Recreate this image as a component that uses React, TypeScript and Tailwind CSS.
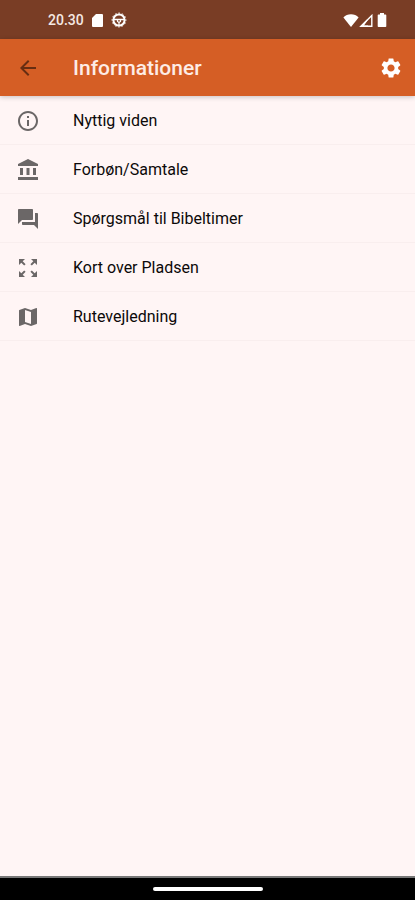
import type { IconType } from "react-icons";
import {
  MdAccountBalance,
  MdArrowBack,
  MdForum,
  MdInfoOutline,
  MdMap,
  MdSettings,
  MdZoomOutMap,
} from "react-icons/md";

type MenuItem = {
  label: string;
  icon: IconType;
};

const items: MenuItem[] = [
  { label: "Nyttig viden", icon: MdInfoOutline },
  { label: "Forbøn/Samtale", icon: MdAccountBalance },
  { label: "Spørgsmål til Bibeltimer", icon: MdForum },
  { label: "Kort over Pladsen", icon: MdZoomOutMap },
  { label: "Rutevejledning", icon: MdMap },
];

function StatusBar() {
  return (
    <div className="flex h-[39px] shrink-0 items-center justify-between bg-[#793d25] pl-12 pr-7 pt-px text-white">
      <div className="flex items-center gap-2">
        <span className="text-sm font-medium text-[#f6e9e4]">20.30</span>
        {/* SD card */}
        <svg className="h-[13px] w-[11px]" viewBox="0 0 11 13" fill="currentColor" aria-hidden="true">
          <path d="M4 0h6a1 1 0 0 1 1 1v11a1 1 0 0 1-1 1H1a1 1 0 0 1-1-1V4z" />
        </svg>
        <svg className="size-4" viewBox="0 0 16 16" fill="none" stroke="currentColor" aria-hidden="true">
          <circle cx="8" cy="8" r="5.6" strokeWidth="2" />
          <circle cx="8" cy="8" r="6.9" strokeWidth="1" strokeDasharray="1.8 1.81" strokeDashoffset="0.9" />
          <path d="M3 7.500h10" strokeWidth="1.5" />
          <path d="M6.500 8v1.500L8 10.500l1.500-1V8M8 10v3" strokeWidth="1.2" />
        </svg>
      </div>
      <div className="flex items-center gap-1" aria-hidden="true">
        <div className="flex">
          <svg className="h-[13px] w-4" viewBox="0 0 16 13" fill="currentColor">
            <path d="M8 13 .4 3.5C2.4 1.3 5 .2 8 .2s5.600 1.100 7.600 3.300z" />
          </svg>
          <svg className="h-[13px] w-[14px]" viewBox="0 0 14 13">
            <path d="M2 12.3 12.800 1.500v10.800z" fill="none" stroke="currentColor" strokeWidth="1.4" />
            <path d="M.5 13 8.500 5v1.500L5 11.500h4V13z" fill="currentColor" />
          </svg>
        </div>
        <svg className="h-[14px] w-[10px]" viewBox="0 0 10 14" fill="currentColor">
          <path d="M3 0h4v1.500h1.500a.8.8 0 0 1 .8.800v10.900a.8.8 0 0 1-.8.800h-7a.8.8 0 0 1-.8-.800V2.300a.8.8 0 0 1 .8-.800H3z" />
        </svg>
      </div>
    </div>
  );
}

function AppBar() {
  return (
    <header className="z-10 flex h-[57px] shrink-0 items-center bg-[#d55e25] pl-4 pr-3 shadow-[0_1px_5px_rgba(0,0,0,0.22)]">
      <button type="button" aria-label="Tilbage" className="text-[#672d12]">
        <MdArrowBack className="size-6" />
      </button>
      <h1 className="ml-[33px] flex-1 pt-0.5 text-[21px] font-medium text-[#fdece6]">Informationer</h1>
      <button type="button" aria-label="Indstillinger" className="text-white">
        <MdSettings className="size-6" />
      </button>
    </header>
  );
}

export default function App() {
  return (
    <div className="flex min-h-screen flex-col bg-[#fff5f5] font-[Roboto,sans-serif]">
      <StatusBar />
      <AppBar />

      <main className="flex-1">
        <ul>
          {items.map(({ label, icon: Icon }) => (
            <li key={label} className="border-b border-[#f9eeee]">
              <button type="button" className="flex h-12 w-full items-center pl-4 pt-0.5 text-left">
                <Icon className="size-6 text-[#6b6767]" />
                <span className="ml-[33px] text-base text-[#0c0909]">{label}</span>
              </button>
            </li>
          ))}
        </ul>
      </main>

      {/* Gesture bar */}
      <div className="flex h-6 shrink-0 items-center justify-center border-t-2 border-[#777] bg-black">
        <div className="h-1 w-[110px] rounded-full bg-white" />
      </div>
    </div>
  );
}
